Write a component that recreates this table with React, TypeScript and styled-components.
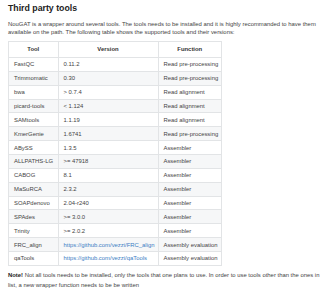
import React from "react";
import styled, { createGlobalStyle } from "styled-components";

const GlobalStyle = createGlobalStyle`
  html, body { margin: 0; padding: 0; overflow: hidden; background: #ffffff; }
  body { font-family: "Liberation Sans", Arial, Helvetica, sans-serif; color: #444; }
`;

const Page = styled.div`
  width: 330px;
  padding: 0 0 0 8px;
  font-size: 5.9px;
  line-height: 8px;
`;

const Title = styled.h3`
  margin: 2.5px 0 0;
  font-size: 8.75px;
  line-height: 10px;
  font-weight: 700;
  color: #222;
`;

const Para = styled.p`
  margin: 7.7px 0 0;
`;

const Table = styled.table`
  margin-top: 4.8px;
  border-collapse: collapse;
  border-spacing: 0;
  table-layout: fixed;
  width: 213px;
`;

const Col = styled.col<{ $w: number }>`
  width: ${(p) => p.$w}px;
`;

const Th = styled.th`
  border: 1px solid #e2e4e6;
  padding: 0 5px;
  height: 15px;
  text-align: center;
  font-weight: 700;
  color: #333;
  line-height: 8px;
  vertical-align: middle;
`;

const Row = styled.tr<{ $striped: boolean }>`
  background: ${(p) => (p.$striped ? "#f6f7f8" : "#ffffff")};
`;

const Td = styled.td`
  border: 1px solid #e2e4e6;
  padding: 0 5px;
  height: 12.86px;
  line-height: 8px;
  white-space: nowrap;
  overflow: hidden;
  vertical-align: middle;
`;

const Link = styled.a`
  color: #3b7dc4;
  text-decoration: none;
`;

const Note = styled.p`
  margin: 3.8px 0 0;
  line-height: 10px;
`;

const Strong = styled.strong`
  color: #222;
`;

type Tool = { name: string; version: string; fn: string; link?: boolean };

const tools: Tool[] = [
  { name: "FastQC", version: "0.11.2", fn: "Read pre-processing" },
  { name: "Trimmomatic", version: "0.30", fn: "Read pre-processing" },
  { name: "bwa", version: "> 0.7.4", fn: "Read alignment" },
  { name: "picard-tools", version: "< 1.124", fn: "Read alignment" },
  { name: "SAMtools", version: "1.1.19", fn: "Read alignment" },
  { name: "KmerGenie", version: "1.6741", fn: "Read pre-processing" },
  { name: "ABySS", version: "1.3.5", fn: "Assembler" },
  { name: "ALLPATHS-LG", version: ">= 47918", fn: "Assembler" },
  { name: "CABOG", version: "8.1", fn: "Assembler" },
  { name: "MaSuRCA", version: "2.3.2", fn: "Assembler" },
  { name: "SOAPdenovo", version: "2.04-r240", fn: "Assembler" },
  { name: "SPAdes", version: ">= 3.0.0", fn: "Assembler" },
  { name: "Trinity", version: ">= 2.0.2", fn: "Assembler" },
  { name: "FRC_align", version: "https://github.com/vezzi/FRC_align", fn: "Assembly evaluation", link: true },
  { name: "qaTools", version: "https://github.com/vezzi/qaTools", fn: "Assembly evaluation", link: true },
];

export default function App() {
  return (
    <>
      <GlobalStyle />
      <Page>
        <Title>Third party tools</Title>
        <Para>
          NouGAT is a wrapper around several tools. The tools needs to be installed and it is highly
          recommanded to have them available on the path. The following table shows the supported
          tools and their versions:
        </Para>
        <Table>
          <colgroup>
            <Col $w={49.5} />
            <Col $w={100} />
            <Col $w={63.5} />
          </colgroup>
          <thead>
            <tr>
              <Th>Tool</Th>
              <Th>Version</Th>
              <Th>Function</Th>
            </tr>
          </thead>
          <tbody>
            {tools.map((t, i) => (
              <Row key={t.name} $striped={i % 2 === 1}>
                <Td>{t.name}</Td>
                <Td>{t.link ? <Link href={t.version}>{t.version}</Link> : t.version}</Td>
                <Td>{t.fn}</Td>
              </Row>
            ))}
          </tbody>
        </Table>
        <Note>
          <Strong>Note!</Strong> Not all tools needs to be installed, only the tools that one plans to
          use. In order to use tools other than the ones in the list, a new wrapper function needs to
          be be written
        </Note>
      </Page>
    </>
  );
}
